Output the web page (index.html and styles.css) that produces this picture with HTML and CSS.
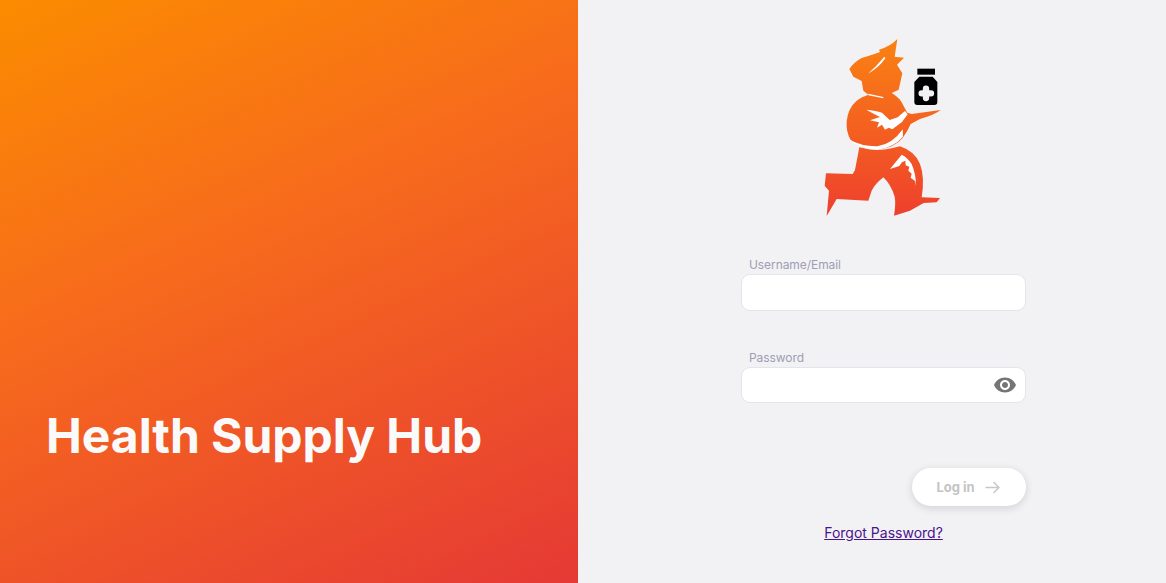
FILE: index.html
```html
<!DOCTYPE html>
<html lang="en">
<head>
<meta charset="utf-8">
<title>Health Supply Hub</title>
<link rel="stylesheet" href="styles.css">
</head>
<body>
<main class="page">
  <section class="hero"><h1 class="hero-title">Health Supply Hub</h1></section>
  <section class="panel">
    <svg class="logo" width="130" height="190" viewBox="0 0 390 570" role="img" aria-label="Running pharmacist logo">
      <defs>
        <linearGradient id="lg" gradientUnits="userSpaceOnUse" x1="0" y1="15" x2="0" y2="548">
          <stop offset="0" stop-color="#fa8212"/>
          <stop offset="1" stop-color="#ee3f2e"/>
        </linearGradient>
      </defs>
      <g fill="url(#lg)">
        <path d="M232 15 L224 68 L252 71 L231 92 L247 118 L236 167 L215 177 Q240 190 252 218 L262 236 L275 240 L362 228 Q345 242 300 255 L272 270 L262 290 L248 312 Q225 340 175 347 Q125 347 92 318 Q78 295 80 262 Q84 222 110 200 Q122 190 145 182 L130 170 L125 141 L100 128 L88 105 Q102 84 125 72 L152 64 L180 54 L177 47 Q210 38 232 15Z"/>
        <path d="M118 340 Q170 354 215 343 L240 337 Q285 352 300 390 Q315 430 305 490 L360 492 L350 505 L311 507 L270 530 L222 545 Q228 510 224 488 Q212 450 190 430 Q165 450 155 470 L145 500 L50 495 L20 546 L27 470 L14 455 L18 418 L98 420 L105 408Z"/>
      </g>
      <g fill="#fff">
        <path d="M193 68 L196 73 Q176 102 144 119 Q170 96 193 68Z"/>
        <path d="M145 179 L190 189 L190 193 L145 184Z"/>
        <path d="M139 227 Q168 230 186 236 L209 258 L233 250 L255 231 L263 241 L246 264 L217 286 L206 281 L195 287 L186 272 L171 281 L177 265 L150 259 L180 249 L158 238Z"/>
        <path d="M86 316 Q125 338 172 337 Q218 330 248 286 L249 308 Q222 340 172 348 Q122 348 86 316Z"/>
        <path d="M245 362 L210 405 L238 396 L246 385 L256 380 L257 394 L268 398 L265 410 L275 419 L272 431 L285 441 L288 456 Q288 420 275 390 Q262 370 245 362Z"/>
      </g>
      <path d="M292 104h53v18h-53z" fill="#000"/>
      <path d="M298 128h40l14 16v60a9 9 0 0 1-9 9h-51a9 9 0 0 1-9-9v-60z" fill="#000"/>
      <path d="M318 164v28M305 178h28" fill="none" stroke="#f2f2f5" stroke-width="19" stroke-linecap="round"/>
    </svg>
    <form class="form">
      <div class="field">
        <label class="field-label" for="user">Username/Email</label>
        <input class="field-input" id="user" type="text">
      </div>
      <div class="field field-pass">
        <label class="field-label" for="pass">Password</label>
        <div class="input-wrap">
          <input class="field-input field-input-short" id="pass" type="password">
          <svg class="eye" width="24" height="24" viewBox="0 0 24 24" aria-hidden="true"><path fill="#757575" d="M12 4.500C7 4.500 2.730 7.610 1 12c1.730 4.390 6 7.500 11 7.500s9.270-3.110 11-7.500c-1.730-4.390-6-7.500-11-7.500zM12 17c-2.760 0-5-2.240-5-5s2.240-5 5-5 5 2.240 5 5-2.240 5-5 5zm0-8c-1.660 0-3 1.340-3 3s1.340 3 3 3 3-1.340 3-3-1.340-3-3-3z"/></svg>
        </div>
      </div>
      <div class="actions">
        <button class="login" type="button" disabled>Log in
          <svg class="arrow" width="15" height="13" viewBox="0 0 15 13" aria-hidden="true"><path d="M0.500 6.500h14M8.500 1l5.500 5.500-5.500 5.500" fill="none" stroke="#c8c8c8" stroke-width="1.500"/></svg>
        </button>
      </div>
      <a class="forgot" href="#">Forgot Password?</a>
    </form>
  </section>
</main>
</body>
</html>
```
FILE: styles.css
```css
* { box-sizing: border-box; }
html, body { margin: 0; height: 100%; }
body { font-family: Inter, "Liberation Sans", sans-serif; background: #f2f2f5; overflow: hidden; }
.page { display: flex; height: 583px; }
.hero {
  width: 578px;
  flex: none;
  display: flex;
  align-items: flex-end;
  padding: 0 0 118px 46px;
  background: linear-gradient(155deg, #fb8c00, #f76b1c 40%, #e53935);
}
.hero-title { margin: 0; color: #fafafa; font-size: 48px; line-height: 58px; font-weight: 700; white-space: nowrap; letter-spacing: -0.05px; }
.panel { flex: 1; display: flex; flex-direction: column; padding: 34px 140px 0 163px; }
.logo { display: block; margin-left: 79px; flex: none; }
.form { display: flex; flex-direction: column; width: 285px; margin-top: 33px; }
.field-label { display: block; padding-left: 8px; margin-bottom: 2px; font-size: 12px; line-height: 15px; color: #9e9eb3; letter-spacing: -0.07px; }
.field-input {
  display: block;
  width: 100%;
  height: 37px;
  border: 1px solid #e4e4ea;
  border-radius: 9px;
  background: #fff;
  outline: none;
}
.field-input-short { height: 36px; }
.field-pass { margin-top: 39px; }
.input-wrap { position: relative; }
.eye { position: absolute; top: 6px; right: 9px; }
.actions { display: flex; justify-content: flex-end; margin-top: 65px; }
.login {
  display: flex;
  align-items: center;
  justify-content: center;
  gap: 10px;
  width: 114px;
  height: 38px;
  padding: 0 2px 0 0;
  border: 0;
  border-radius: 19px;
  background: #fff;
  color: #c4c4c4;
  font: 700 13px Inter, "Liberation Sans", sans-serif;
  box-shadow: 0 2px 8px rgba(0, 0, 0, 0.14);
}
.forgot { align-self: center; margin-top: 18px; font-size: 14px; line-height: 17px; color: #4a148c; }
```
